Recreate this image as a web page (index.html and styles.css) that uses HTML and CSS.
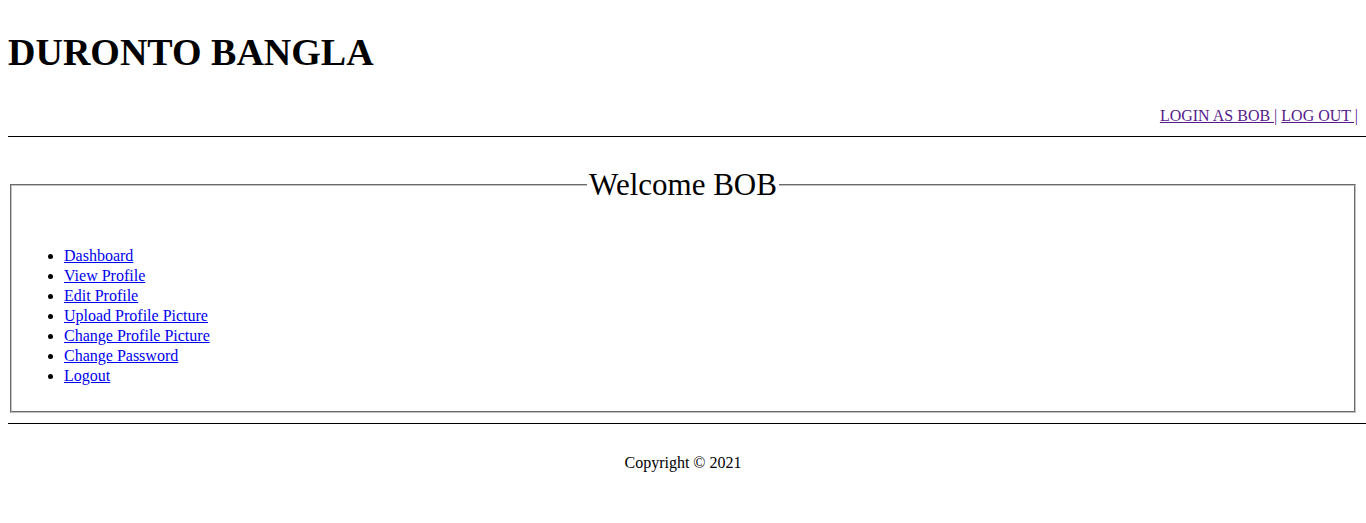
FILE: index.html
```html
<!DOCTYPE html>
<html lang="en">
<head>
<meta charset="utf-8">
<title>DURONTO BANGLA</title>
<link rel="stylesheet" href="styles.css">
</head>
<body>
<div class="page">
  <header class="site-header">
    <h1 class="site-title">DURONTO BANGLA</h1>
    <nav class="top-nav"><a class="top-link" href="#">LOGIN AS BOB |</a> <a class="top-link" href="#">LOG OUT |</a></nav>
    <hr class="rule rule-top">
  </header>
  <main>
    <fieldset class="panel">
      <legend class="panel-title">Welcome BOB</legend>
      <ul class="menu">
        <li><a class="menu-link" href="#">Dashboard</a></li>
        <li><a class="menu-link" href="#">View Profile</a></li>
        <li><a class="menu-link" href="#">Edit Profile</a></li>
        <li><a class="menu-link" href="#">Upload Profile Picture</a></li>
        <li><a class="menu-link" href="#">Change Profile Picture</a></li>
        <li><a class="menu-link" href="#">Change Password</a></li>
        <li><a class="menu-link" href="#">Logout</a></li>
      </ul>
    </fieldset>
  </main>
  <footer class="site-footer">
    <hr class="rule rule-bottom">
    <p class="copyright">Copyright © 2021</p>
  </footer>
</div>
</body>
</html>
```

FILE: styles.css
```css
html, body {
  margin: 0;
  padding: 0;
  background: #ffffff;
}

body {
  font-family: "Liberation Serif", "Times New Roman", serif;
  font-size: 16px;
  color: #000000;
}

.page {
  padding: 0 8px;
}

.site-title {
  font-size: 38px;
  line-height: 44px;
  font-weight: bold;
  margin: 0;
  padding-top: 30px;
}

.top-nav {
  text-align: right;
  line-height: 18px;
  margin-top: 33px;
}

.top-link {
  color: #551a8b;
}

.rule {
  border: 0;
  border-top: 1px solid #000000;
  height: 0;
  margin-left: 0;
  margin-right: -8px;
}

.rule-top {
  margin-top: 11px;
  margin-bottom: 0;
}

.panel {
  margin: 31px 2px 0;
  padding: 6px 12px 10px;
  border: 2px groove #c0c0c0;
}

.panel-title {
  margin: 0 auto;
  padding: 0 2px;
  font-size: 31px;
  line-height: 34px;
}

.menu {
  margin: 38px 0 15px;
  padding-left: 40px;
}

.menu li {
  line-height: 20px;
}

.menu-link {
  color: #0000ee;
}

.rule-bottom {
  margin-top: 10px;
  margin-bottom: 0;
}

.copyright {
  text-align: center;
  line-height: 18px;
  margin: 30px 0 0;
}
```
